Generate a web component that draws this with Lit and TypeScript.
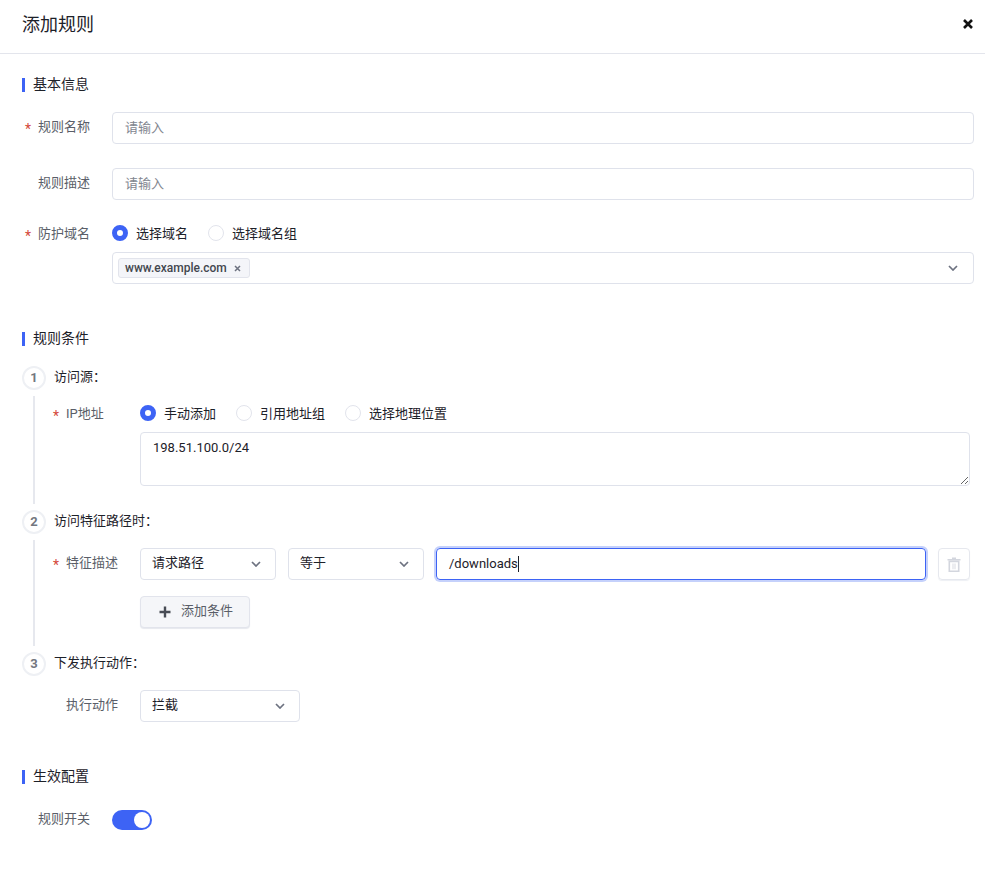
import { LitElement, html, css } from "lit";
import { customElement } from "lit/decorators.js";

const chevron = html`<svg class="chev" width="10" height="6" viewBox="0 0 10 6"><path d="M1 1l4 4 4-4" fill="none" stroke="#6d7280" stroke-width="1.7"/></svg>`;

@customElement("app-root")
export class AppRoot extends LitElement {
  static styles = css`
    :host { display: block; height: 889px; background: #fff; color: #1d2129; overflow: hidden;
      font: 13px/18px Roboto, "Noto Sans CJK SC", sans-serif; }
    * { box-sizing: border-box; }
    .header { height: 54px; border-bottom: 1px solid #e3e5ec; display: flex; align-items: center;
      justify-content: space-between; padding: 0 12px 6px 22px; }
    .title { font-size: 18px; line-height: 24px; margin-top: 2px; }
    .close { display: block; }
    .main { padding: 24px 11px 0 22px; }
    .section { margin-top: 48px; }
    .section.first { margin-top: 0; }
    .sec-title { height: 14px; line-height: 12px; font-size: 14px; border-left: 3px solid #3d63f5;
      padding-left: 8px; margin-bottom: 20px; }
    .row { display: flex; align-items: flex-start; margin-bottom: 24px; }
    .row.tight { margin-bottom: 0; }
    .label { width: 90px; flex: none; display: flex; color: #5a5e68; line-height: 30px; height: 32px; }
    .label.small { line-height: 20px; height: 18px; }
    .star { width: 16px; padding-left: 3px; flex: none; color: #d4493a; font-size: 14px; line-height: 35px; }
    .label.small .star { line-height: 25px; }
    .step-row .label { width: 88px; }
    .step-row .star { width: 14px; padding-left: 1px; }
    .grow { flex: 1; min-width: 0; }
    .input { display: block; width: 100%; height: 32px; border: 1px solid #dfe2eb; border-radius: 4px;
      padding: 0 12px 2px; font: inherit; color: inherit; background: #fff; outline: none; }
    .input::placeholder { color: #82868f; opacity: 1; }
    .radios { display: flex; align-items: center; height: 18px; }
    .radio { display: flex; align-items: center; gap: 8px; margin-right: 20px; }
    .radio span:last-child { line-height: 20px; height: 18px; }
    .dot { width: 16px; height: 16px; border-radius: 50%; border: 1px solid #e2e4ec; background: #fff; flex: none; }
    .dot.on { border: 5px solid #3d63f5; }
    .select { height: 32px; border: 1px solid #dfe2eb; border-radius: 4px; background: #fff;
      display: flex; align-items: center; justify-content: space-between; padding: 0 14px 0 11px; flex: none; }
    .select > span { line-height: 16px; height: 18px; }
    .tagbox { margin-top: 10px; padding: 0 15px 0 5px; }
    .tag { height: 20px; display: flex; align-items: center; gap: 6px; padding: 0 8px 0 6px; border: 1px solid #e2e4ec;
      border-radius: 3px; background: #f4f5f9; color: #43474f; font-size: 12px; font-weight: 500; }
    .tag svg { display: block; margin-left: 1px; }
    .step-head { display: flex; align-items: center; height: 24px; gap: 8px; }
    .step-head span:last-child { line-height: 16px; height: 18px; }
    .num { width: 24px; height: 24px; border: 2px solid #eef0f4; border-radius: 50%; display: flex;
      align-items: center; justify-content: center; font-weight: 700; color: #73777f; }
    .step-body { margin: 6px 4px 6px 11px; border-left: 2px solid #e6e8ee; padding: 8px 0 18px 17px; }
    .step-body.last { border-left-color: transparent; padding-bottom: 0; margin-bottom: 0; }
    .step-row { margin-bottom: 0; }
    .area { display: block; width: 100%; height: 54px; margin-top: 10px; border: 1px solid #dfe2eb; border-radius: 4px;
      padding: 6px 12px; font: inherit; color: inherit; outline: none; resize: both; max-width: 100%; min-width: 100%; }
    .sel-path { width: 136px; margin-right: 12px; }
    .sel-eq { width: 136px; margin-right: 12px; }
    .sel-action { width: 160px; }
    .focused { flex: 1; height: 32px; border: 1px solid #3d63f5; border-radius: 4px; box-shadow: 0 0 0 2px #c5d1fb;
      padding: 0 12px; display: flex; align-items: center; min-width: 0; }
    .caret { width: 1px; height: 16px; background: #1d2129; }
    .trash { width: 32px; height: 32px; margin-left: 12px; flex: none; border: 1px solid #e6e8ee; border-radius: 4px;
      display: flex; align-items: center; justify-content: center; box-shadow: 0 1px 1px #eef0f4; }
    .add { display: flex; align-items: center; width: 110px; height: 32px; margin-top: 16px; border: 1px solid #e2e4ec;
      border-radius: 4px; background: #f5f6f9; color: #5a5e68; padding-left: 18px; gap: 10px; box-shadow: 0 1px 1px #e6e8ee; }
    .add span { line-height: 16px; height: 18px; }
    .switch { width: 40px; height: 20px; border-radius: 10px; background: #3d63f5; display: flex; align-items: center;
      justify-content: flex-end; padding-right: 2px; margin-top: 6px; }
    .knob { width: 16px; height: 16px; border-radius: 50%; background: #fff; }
    .row.last { margin-bottom: 0; }
  `;

  private label(text: string, required = true, small = false) {
    return html`<div class="label ${small ? "small" : ""}"><span class="star">${required ? "*" : ""}</span><span>${text}</span></div>`;
  }
  private radio(text: string, on = false) {
    return html`<div class="radio"><span class="dot ${on ? "on" : ""}"></span><span>${text}</span></div>`;
  }
  private step(n: number, text: string) {
    return html`<div class="step-head"><span class="num">${n}</span><span>${text}</span></div>`;
  }

  render() {
    return html`
      <div class="header">
        <div class="title">添加规则</div>
        <svg class="close" width="10" height="10" viewBox="0 0 10 10"><path d="M1 1l8 8M9 1l-8 8" stroke="#111" stroke-width="2.6" fill="none"/></svg>
      </div>
      <div class="main">
        <section class="section first">
          <div class="sec-title">基本信息</div>
          <div class="row">${this.label("规则名称")}<div class="grow"><input class="input" placeholder="请输入" /></div></div>
          <div class="row">${this.label("规则描述", false)}<div class="grow"><input class="input" placeholder="请输入" /></div></div>
          <div class="row tight">${this.label("防护域名", true, true)}
            <div class="grow">
              <div class="radios">${this.radio("选择域名", true)}${this.radio("选择域名组")}</div>
              <div class="select tagbox">
                <div class="tag"><span>www.example.com</span>
                  <svg width="7" height="7" viewBox="0 0 7 7"><path d="M1 1l5 5M6 1l-5 5" stroke="#6d7280" stroke-width="1.5" fill="none"/></svg>
                </div>
                ${chevron}
              </div>
            </div>
          </div>
        </section>
        <section class="section">
          <div class="sec-title">规则条件</div>
          ${this.step(1, "访问源：")}
          <div class="step-body">
            <div class="row step-row">${this.label("IP地址", true, true)}
              <div class="grow">
                <div class="radios">${this.radio("手动添加", true)}${this.radio("引用地址组")}${this.radio("选择地理位置")}</div>
                <textarea class="area" .value=${"198.51.100.0/24"}></textarea>
              </div>
            </div>
          </div>
          ${this.step(2, "访问特征路径时：")}
          <div class="step-body">
            <div class="row step-row">${this.label("特征描述")}
              <div class="select sel-path"><span>请求路径</span>${chevron}</div>
              <div class="select sel-eq"><span>等于</span>${chevron}</div>
              <div class="focused"><span>/downloads</span><span class="caret"></span></div>
              <div class="trash">
                <svg width="14" height="15" viewBox="0 0 14 15">
                  <path d="M5 .5h4v1.5h4.5v1.4H.5V2H5z" fill="#d3d6de"/>
                  <path d="M2.3 4.4h9.4v9.8H2.3z" fill="none" stroke="#d3d6de" stroke-width="1.6"/>
                  <path d="M5.4 6.4h1.2v5.8H5.4zM7.4 6.4h1.2v5.8H7.4z" fill="#dfe1e7"/>
                </svg>
              </div>
            </div>
            <div class="row step-row">
              <div class="label" aria-hidden="true"></div>
              <div class="add">
                <svg width="12" height="12" viewBox="0 0 12 12"><path d="M6 .5v11M.5 6h11" stroke="#484c55" stroke-width="2.4" fill="none"/></svg>
                <span>添加条件</span>
              </div>
            </div>
          </div>
          ${this.step(3, "下发执行动作：")}
          <div class="step-body last">
            <div class="row step-row">${this.label("执行动作", false)}
              <div class="select sel-action"><span>拦截</span>${chevron}</div>
            </div>
          </div>
        </section>
        <section class="section">
          <div class="sec-title">生效配置</div>
          <div class="row last">${this.label("规则开关", false)}<div class="switch"><span class="knob"></span></div></div>
        </section>
      </div>
    `;
  }
}
